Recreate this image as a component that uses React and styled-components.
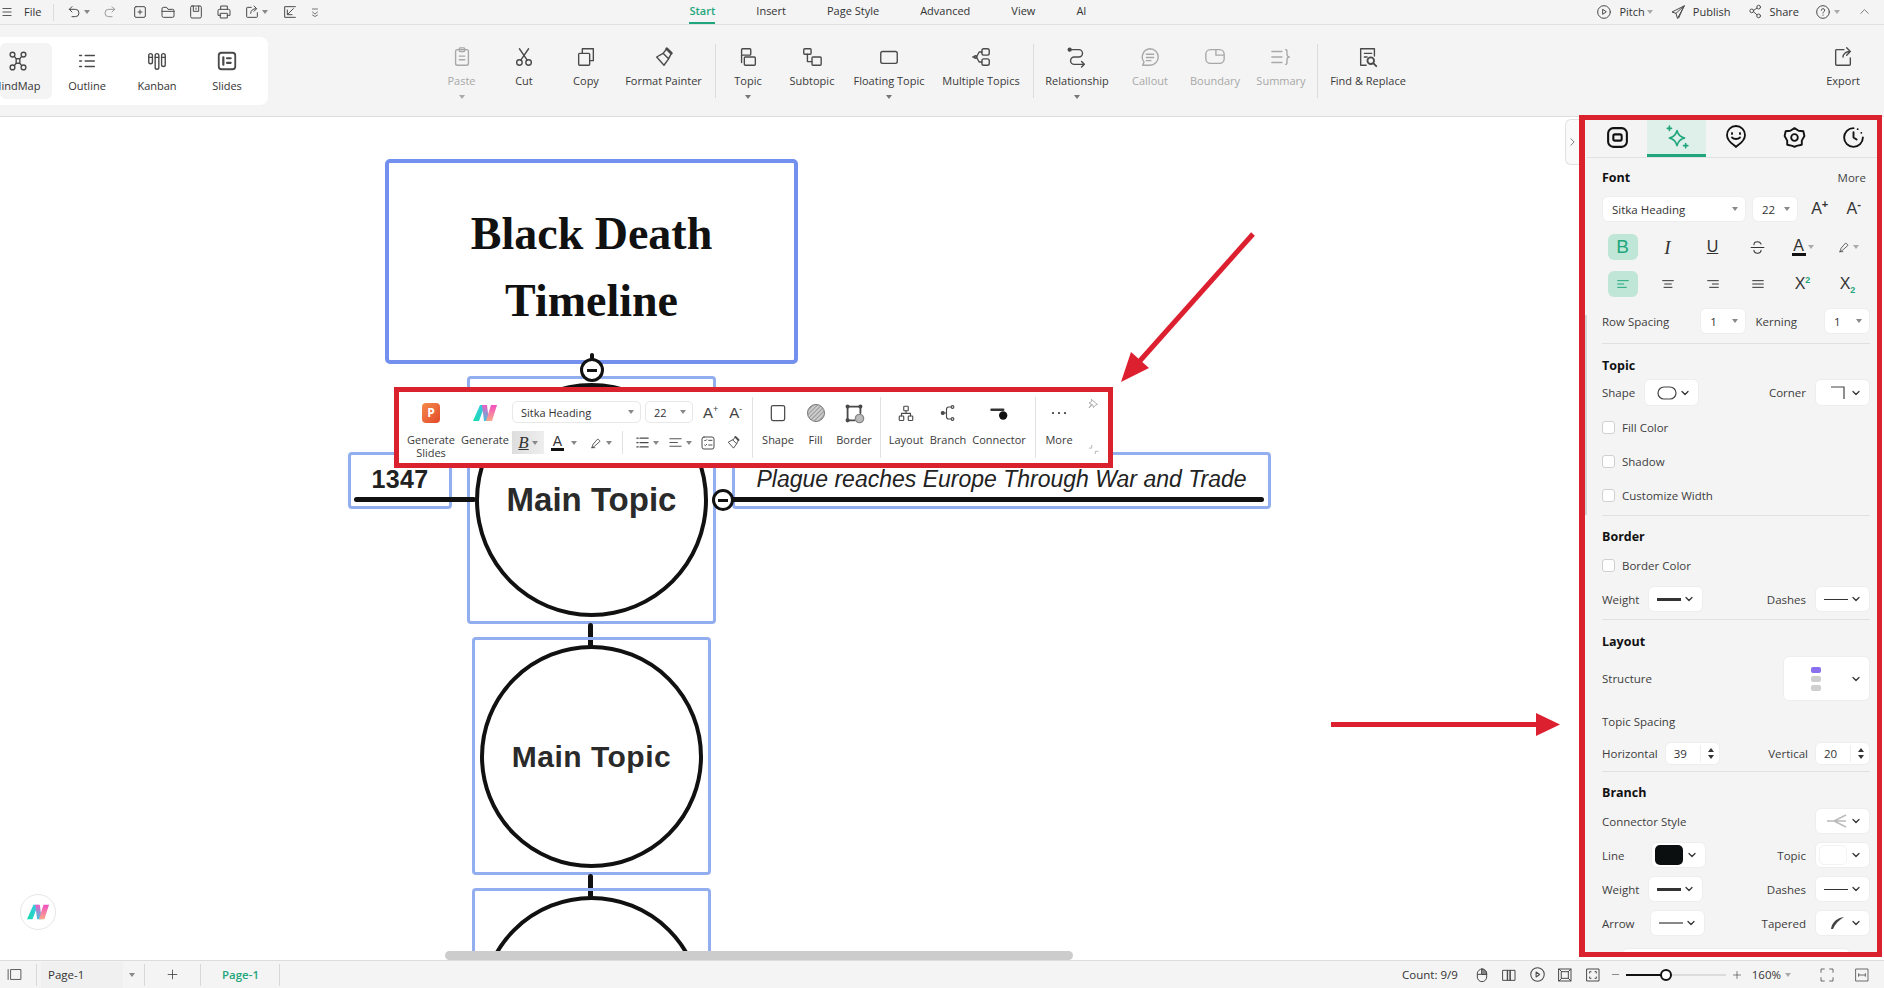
import React from 'react';
import styled, { createGlobalStyle, css } from 'styled-components';
import { ChevronDown, ChevronUp, ChevronRight, Plus, Minus } from 'lucide-react';

const GlobalStyle = createGlobalStyle`
  html, body { margin: 0; padding: 0; background: #fff; }
  body { font-family: "Open Sans", "Liberation Sans", sans-serif; font-size: 11px; color: #333; }
  * { box-sizing: border-box; }
`;

const RED = '#d9222e';
const GREEN = '#1fa67c';

const icons = {
  menu: <path d="M5 6h14M5 12h14M5 18h14" />,
  undo: <path d="M9 4 5 8l4 4M5 8h9a5.500 5.500 0 0 1 0 11H9" />,
  redo: <path d="M15 4l4 4-4 4M19 8h-9a5.500 5.500 0 0 0 0 11h5" />,
  add: <><rect x="4" y="4" width="16" height="16" rx="2" /><path d="M12 9v6M9 12h6" /></>,
  open: <path d="M3 7a2 2 0 0 1 2-2h5l2 3h7a2 2 0 0 1 2 2v8a2 2 0 0 1-2 2H5a2 2 0 0 1-2-2zM3 11h18" />,
  save: <><rect x="4" y="3" width="16" height="18" rx="2" /><path d="M8 3v8h8V3M12 6v2" /></>,
  print: <path d="M7 8V3h10v5M7 17H3v-7a2 2 0 0 1 2-2h14a2 2 0 0 1 2 2v7h-4M7 14h10v7H7z" />,
  share: <path d="M20 13v6a1 1 0 0 1-1 1H5a1 1 0 0 1-1-1V6a1 1 0 0 1 1-1h6M10 14c0-4 3-7 8-7M15 3l4 4-4 4" />,
  importDoc: <path d="M20 4H4v16h16M17 7l-9 9M8 9v7h7" />,
  more: <path d="M7 6h10M7 12l5 4 5-4M7 18l5 3 5-3" />,
  pitch: <><circle cx="12" cy="12" r="9.500" /><path d="M10 8.500v7l5-3.500z" /></>,
  send: <path d="M21 3 3 12l6 2 2 7zM21 3 9 14M21 3l-8 18" />,
  nodes: <><circle cx="6" cy="11" r="3" /><circle cx="17" cy="5" r="3" /><circle cx="17" cy="19" r="3" /><path d="M9 10l5.500-3.500M9 12.500l5.500 5" /></>,
  help: <><circle cx="12" cy="12" r="9.500" /><path d="M9.500 9.500a2.500 2.500 0 1 1 3.500 2.300c-.7.4-1 .8-1 1.700M12 16.500v.5" /></>,
  mindmap: <><circle cx="6" cy="5" r="2.600" /><circle cx="18" cy="5" r="2.600" /><circle cx="6" cy="19" r="2.600" /><circle cx="18" cy="19" r="2.600" /><path d="M8 7l2 2.500M16 7l-2 2.500M8 17l2-2.500M16 17l-2-2.500M10 9.500h4v5h-4z" /></>,
  outline: <path d="M4 6h2M10 6h10M4 12h2M10 12h10M4 18h2M10 18h10" />,
  kanban: <><rect x="3" y="4" width="4" height="11" rx="2" /><rect x="10" y="4" width="4" height="17" rx="2" /><rect x="17" y="4" width="4" height="14" rx="2" /><path d="M3 8h4M10 8h4M17 8h4" /></>,
  slides: <><rect x="3" y="3" width="18" height="18" rx="3" strokeWidth="2" /><path d="M8 8v8M12 9h4M12 14h4" strokeWidth="2.400" /></>,
  paste: <><rect x="5" y="4" width="14" height="17" rx="2" /><rect x="9" y="2" width="6" height="4" rx="1" /><path d="M9 11h6M9 15h6" /></>,
  cut: <><circle cx="7" cy="18" r="3" /><circle cx="17" cy="18" r="3" /><path d="M8.500 15.500 17 3M15.500 15.500 7 3" /></>,
  copy: <><rect x="4" y="8" width="12" height="13" rx="1" /><path d="M8 8V3h12v13l-4 0" /></>,
  painter: <><path d="M4 12l8 9 5-7-6-6zM11 8l4-5 5 5-3 6" /><path d="M15 3l5 5" strokeWidth="3" /></>,
  topic: <><rect x="5" y="3" width="10" height="7" rx="1" /><path d="M5 10v8" /><rect x="8" y="12" width="12" height="9" rx="1" /></>,
  subtopic: <><rect x="3" y="3" width="8" height="6" rx="1" /><path d="M7 9v8h5" /><rect x="12" y="12" width="10" height="9" rx="1" /></>,
  floating: <rect x="3" y="6" width="18" height="13" rx="2" />,
  multiple: <><rect x="13" y="3" width="8" height="7" rx="2" /><rect x="13" y="14" width="8" height="7" rx="2" /><path d="M13 6.500H10l-3 5.500 3 5.500h3M3 12h4" /><circle cx="6" cy="12" r="1.500" /></>,
  relation: <><path d="M4 4h10a3 3 0 0 1 0 8H9a3 3 0 0 0 0 8h10M17 17l3 3-3 3" /><circle cx="4" cy="4" r="1.600" fill="currentColor" /></>,
  callout: <path d="M12 3a9 9 0 0 1 0 18H4l1.500-3.500A9 9 0 0 1 12 3zM8 9h8M8 12.500h8M8 16h5" />,
  boundary: <path d="M7 4h10a5 5 0 0 1 5 5v5a5 5 0 0 1-5 5H7a5 5 0 0 1-5-5V9a5 5 0 0 1 5-5zM13 4v6H22" />,
  summary: <path d="M2 6h11M2 12h11M2 18h11M17 4c2 0 1.500 2 1.500 4s.5 4 2.500 4c-2 0-2.500 2-2.500 4s.5 4-1.500 4" />,
  find: <><path d="M10 21H4V3h15v8M8 8h8M8 12h3" /><circle cx="15" cy="16" r="3.600" strokeWidth="2" /><path d="M18 19l3 3" strokeWidth="2" /></>,
  exportIcon: <path d="M13 4H5a1 1 0 0 0-1 1v15a1 1 0 0 0 1 1h14a1 1 0 0 0 1-1v-7M12 12c0-3 3-6 7-6M16 2l4 4-4 4" />,
  square: <rect x="4" y="3" width="16" height="18" rx="2" />,
  border: <><path d="M6 5h12M5 6v13M6 20h7M19 6v6" strokeWidth="2" /><circle cx="5" cy="5" r="1.500" fill="currentColor" /><circle cx="19" cy="5" r="1.500" fill="currentColor" /><circle cx="5" cy="20" r="1.500" fill="currentColor" /><circle cx="18" cy="18" r="4.500" fill="#bbb" stroke="#888" /></>,
  layout: <><rect x="9" y="3" width="6" height="6" rx="1" /><rect x="3" y="16" width="6" height="6" rx="1" /><rect x="15" y="16" width="6" height="6" rx="1" /><path d="M12 9v3.500M6 16v-3.500h12V16" /></>,
  branch: <><circle cx="5" cy="12" r="2" fill="currentColor" /><circle cx="18" cy="4" r="1.800" /><circle cx="18" cy="20" r="1.800" /><path d="M7 12h3M16 4h-3a3 3 0 0 0-3 3v10a3 3 0 0 0 3 3h3" /></>,
  connector: <><path d="M3 8h14" strokeWidth="3" /><circle cx="17" cy="15" r="5" fill="#111" stroke="none" /></>,
  dots: <path d="M4 12h.01M12 12h.01M20 12h.01" strokeWidth="3" />,
  pin: <path d="M9 3l12 10-4 1-4 5-2-6-7 7 5-8-5-2 5-3z" />,
  collapse: <path d="M3 9h5V3M16 21v-5h6" />,
  list: <path d="M3 5h2M3 12h2M3 19h2M8 5h13M8 12h13M8 19h13" strokeWidth="2" />,
  align: <path d="M3 6h18M3 12h12M3 18h18" />,
  check: <><rect x="3" y="3" width="18" height="18" rx="3" /><path d="M7 8l1 1 2-2M13 8h5M7 15l1 1 2-2M13 15h5" /></>,
  pen: <><path d="M5 20l2-6 8-9 4 4-9 8z" /><path d="M5 20h5" /></>,
  strike: <path d="M17 7c-1-2-3-3-5-3-3 0-5 1.500-5 4M3 12h18M7 16c0 3 2 4 5 4s5-1 5-4" />,
  alignLeft: <path d="M4 7h16M4 12h9M4 17h13" />,
  alignCenter: <path d="M4 7h16M7 12h10M6 17h12" />,
  alignRight: <path d="M4 7h16M11 12h9M7 17h13" />,
  justify: <path d="M4 7h16M4 12h16M4 17h16" />,
  tabFrame: <><rect x="3" y="3" width="18" height="18" rx="5" strokeWidth="2" /><rect x="8" y="9" width="8" height="6" rx="1.500" strokeWidth="2" /></>,
  tabSpark: <path d="M12 6c1 4 3 6 7 7-4 1-6 3-7 7-1-4-3-6-7-7 4-1 6-3 7-7zM5 2v4M3 4h4M20 18v4M18 20h4" />,
  tabPin: <><path d="M12 22c-2-2.500-9-5-9-12a9 9 0 0 1 18 0c0 7-7 9.500-9 12z" /><path d="M8 8v1M16 8v1M8 12.500c2 2 6 2 8 0" /></>,
  tabBadge: <><path d="M12 3l4 2.500 4.500.5 1 4.500-2.500 4.500 0 4-5 1-2 1-2-1-5-1 0-4-2.500-4.500 1-4.500 4.500-.5z" /><circle cx="12" cy="12" r="3.200" /></>,
  tabClock: <path d="M12 3a9 9 0 1 0 9 9M12 7v5l3 2M16 4h.01M19.500 7.500h.01M21 12h.01" />,
  sidebar: <path d="M3 5v14M7 5h14v14H7z" />,
  mouse: <><path d="M12 3a7 7 0 0 1 7 7v5a7 7 0 0 1-14 0v-5a7 7 0 0 1 7-7zM5 11h14" /><path d="M12 3a7 7 0 0 1 7 8h-7z" fill="#888" /></>,
  book: <path d="M3 5h7v15H3zM10 5h4v15h-4zM14 5h7v15h-7z" />,
  fitPage: <path d="M3 3h18v18H3zM7 7h10v10H7zM3 3l4 4M21 3l-4 4M3 21l4-4M21 21l-4-4" />,
  fitScreen: <path d="M3 3h18v18H3zM7 9V7h2M15 7h2v2M17 15v2h-2M9 17H7v-2" />,
  full: <path d="M3 8V3h5M16 3h5v5M21 16v5h-5M8 21H3v-5" />,
  fitWidth: <path d="M3 3h18v18H3zM7 12h10M7 10v4M17 10v4" />,
};

const IconSvg = styled.svg`
  display: block;
  flex: none;
  fill: none;
  stroke: currentColor;
  stroke-width: ${p => p.$w || 1.5};
  stroke-linecap: round;
  stroke-linejoin: round;
  color: ${p => p.$c || '#4a4a4a'};
`;

const Icon = ({ name, size = 20, color, weight }) => (
  <IconSvg viewBox="0 0 24 24" width={size} height={size} $c={color} $w={weight}>
    {icons[name]}
  </IconSvg>
);

const Logo = ({ id, size = 24 }) => (
  <svg viewBox="0 0 24 24" width={size} height={size}>
    <defs>
      <linearGradient id={`${id}a`} x1="0" y1="1" x2="1" y2="0">
        <stop offset="0" stopColor="#17dcae" />
        <stop offset="1" stopColor="#3cc6ea" />
      </linearGradient>
      <linearGradient id={`${id}m`} x1="0" y1="0" x2="0" y2="1">
        <stop offset="0" stopColor="#f35cc0" />
        <stop offset="1" stopColor="#3cc6e0" />
      </linearGradient>
      <linearGradient id={`${id}b`} x1="0" y1="0" x2="0" y2="1">
        <stop offset="0" stopColor="#f24fc0" />
        <stop offset="1" stopColor="#f9a98a" />
      </linearGradient>
    </defs>
    <polygon points="0,20 7,4 12,4 6,20" fill={`url(#${id}a)`} />
    <polygon points="9,4 14,4 16,20 11,20" fill={`url(#${id}m)`} />
    <polygon points="13,20 18,4 24,4 19,20" fill={`url(#${id}b)`} />
  </svg>
);

const Page = styled.div`
  width: 1884px;
  height: 988px;
  display: flex;
  flex-direction: column;
  overflow: hidden;
  background: #fff;
`;

/* title bar */
const TitleBar = styled.header`
  height: 25px;
  flex: none;
  display: flex;
  align-items: center;
  background: #f4f4f4;
  border-bottom: 1px solid #e0e0e0;
  position: relative;
  z-index: 3;
`;

const TopSlot = styled.div`
  margin-left: ${p => p.$ml || 0}px;
  display: flex;
  align-items: center;
  flex: none;
  color: #333;
  padding-bottom: 1px;
`;

const TopSep = styled.div`
  width: 1px;
  height: 17px;
  background: #dcdcdc;
  margin-left: ${p => p.$ml || 0}px;
`;

const Caret = styled.span`
  display: block;
  flex: none;
  margin-left: ${p => p.$ml || 0}px;
  width: 0;
  height: 0;
  border-left: 3px solid transparent;
  border-right: 3px solid transparent;
  border-top: 4px solid ${p => p.$c || '#888'};
`;

const TopTabs = styled.nav`
  display: flex;
  gap: 41px;
  height: 24px;
  margin-left: 368px;
`;

const TopTab = styled.div`
  height: 24px;
  line-height: 21px;
  font-size: 11px;
  white-space: nowrap;
  color: ${p => (p.$active ? GREEN : '#333')};
  font-weight: ${p => (p.$active ? 600 : 400)};
  border-bottom: ${p => (p.$active ? `2px solid ${GREEN}` : '2px solid transparent')};
`;

const TopRight = styled.div`
  margin-left: auto;
  padding-right: 12px;
  display: flex;
  align-items: center;
`;

/* ribbon */
const Ribbon = styled.section`
  height: 92px;
  flex: none;
  display: flex;
  background: #f4f4f4;
  border-bottom: 1px solid #dedede;
`;

const ModeCard = styled.div`
  width: 268px;
  height: 68px;
  margin-top: 12px;
  flex: none;
  display: flex;
  align-items: center;
  background: #fff;
  border-radius: 0 8px 8px 0;
  margin-right: 162px;
`;

const ModeItem = styled.div`
  width: ${p => p.$w}px;
  margin-left: ${p => p.$ml || 0}px;
  height: 56px;
  flex: none;
  display: flex;
  flex-direction: column;
  align-items: center;
  padding-top: 7px;
  border-radius: 6px;
  background: ${p => (p.$active ? '#f4f4f4' : 'transparent')};
  font-size: 11px;
  white-space: nowrap;
  overflow: ${p => (p.$active ? 'hidden' : 'visible')};
`;

const ModeLabel = styled.span`
  margin-top: 7px;
  line-height: 14px;
`;

const ActiveIcon = styled.div`
  margin-left: -16px;
`;

const ActiveLabel = styled(ModeLabel)`
  margin-left: -20px;
`;

const RibbonItem = styled.div`
  width: ${p => p.$w}px;
  flex: none;
  display: flex;
  flex-direction: column;
  align-items: center;
  padding-top: 21px;
  white-space: nowrap;
  font-size: 11px;
  color: ${p => (p.$off ? '#a8a8a8' : '#3a3a3a')};
`;

const RibbonLabel = styled.span`
  margin-top: 6px;
  line-height: 14px;
  margin-bottom: 7px;
`;

const RibbonSep = styled.div`
  width: 1px;
  height: 54px;
  flex: none;
  margin: 19px 0 0 5px;
  background: #dcdcdc;
`;

const Spacer = styled.div`
  flex: 1;
`;

const RibbonEnd = styled.div`
  flex: 0 0 9px;
`;

/* main */
const Main = styled.main`
  flex: 1;
  min-height: 0;
  display: flex;
`;

const Canvas = styled.div`
  position: relative;
  width: 1579px;
  flex: none;
  overflow: hidden;
  background: #fff;
`;

const placed = css`
  position: absolute;
  left: ${p => p.$x}px;
  top: ${p => p.$y}px;
  width: ${p => p.$w}px;
  height: ${p => p.$h}px;
`;

const TitleNode = styled.div`
  ${placed}
  border: 4px solid #7390ee;
  border-radius: 5px;
  padding-top: 10px;
  display: flex;
  align-items: center;
  justify-content: center;
  text-align: center;
  font-family: "Liberation Serif", serif;
  font-weight: 700;
  font-size: 46px;
  line-height: 67px;
  color: #111;
`;

const SelectBox = styled.div`
  ${placed}
  border: 3px solid #93aeee;
  border-radius: 4px;
`;

const TopicCircle = styled.div`
  ${placed}
  border: 4.500px solid #111;
  border-radius: 50%;
  background: #fff;
  display: flex;
  align-items: center;
  justify-content: center;
  font-family: "Liberation Sans", sans-serif;
  font-weight: 700;
  font-size: ${p => p.$fs}px;
  letter-spacing: ${p => p.$ls || 0}px;
  color: #2a2a2a;
  white-space: nowrap;
`;

const BranchText = styled.div`
  ${placed}
  display: flex;
  align-items: center;
  justify-content: center;
  font-family: "Liberation Sans", sans-serif;
  font-size: ${p => p.$fs}px;
  font-weight: ${p => (p.$bold ? 700 : 400)};
  font-style: ${p => (p.$italic ? 'italic' : 'normal')};
  letter-spacing: ${p => p.$ls || 0}px;
  color: #222;
  white-space: nowrap;
`;

const Wire = styled.div`
  ${placed}
  background: #111;
  border-radius: 3px;
`;

const Collapse = styled.div`
  ${placed}
  border: 3px solid #111;
  border-radius: 50%;
  background: #fff;
  display: flex;
  align-items: center;
  justify-content: center;
  &::after {
    content: '';
    width: 10px;
    height: 3px;
    background: #111;
  }
`;

const ScrollThumb = styled.div`
  ${placed}
  background: #ccc;
  border-radius: 5px;
`;

const AiBadge = styled.div`
  ${placed}
  border: 1px solid #e6e6e6;
  border-radius: 50%;
  background: #fff;
  display: flex;
  align-items: center;
  justify-content: center;
`;

const PanelHandle = styled.div`
  ${placed}
  border: 1px solid #e2e2e2;
  border-right: none;
  border-radius: 6px 0 0 6px;
  background: #fafafa;
  display: flex;
  align-items: center;
  justify-content: flex-end;
`;

const Annotations = styled.svg`
  position: absolute;
  left: 0;
  top: 0;
  pointer-events: none;
`;

/* floating toolbar */
const FloatBar = styled.div`
  position: absolute;
  left: 394px;
  top: 270px;
  width: 719px;
  height: 81px;
  border: 5px solid ${RED};
  background: #fff;
  display: flex;
  padding-left: 4px;
`;

const FloatItem = styled.div`
  width: ${p => p.$w}px;
  flex: none;
  display: flex;
  flex-direction: column;
  align-items: center;
  padding-top: 10px;
  font-size: 11px;
  line-height: 13px;
  text-align: center;
  color: #3a3a3a;
  white-space: nowrap;
`;

const FloatIcon = styled.div`
  height: 22px;
  display: flex;
  align-items: center;
  justify-content: center;
  margin-bottom: 9px;
`;

const PptBadge = styled.div`
  width: 18px;
  height: 20px;
  border-radius: 4px;
  background: linear-gradient(135deg, #f58a4b, #e2492a);
  color: #fff;
  font-weight: 700;
  font-size: 12px;
  line-height: 20px;
  text-align: center;
`;

const FontGroup = styled.div`
  width: 240px;
  flex: none;
  display: flex;
  flex-direction: column;
  padding-top: 9px;
  margin-left: 1px;
`;

const FontRow = styled.div`
  display: flex;
  align-items: center;
  height: ${p => p.$h}px;
  margin-top: ${p => p.$mt || 0}px;
`;

const FloatSelect = styled.div`
  width: ${p => p.$w}px;
  height: 22px;
  margin-right: 4px;
  flex: none;
  display: flex;
  align-items: center;
  justify-content: space-between;
  padding: 0 6px 0 8px;
  border: 1px solid #e8e8e8;
  border-radius: 5px;
  font-size: 11px;
  color: #333;
`;

const GrowText = styled.span`
  font-size: ${p => p.$fs || 15}px;
  line-height: 1;
  color: #444;
  margin-left: ${p => p.$ml}px;
  font-family: "Liberation Sans", sans-serif;
  & sup {
    font-size: 9px;
    line-height: 0;
  }
`;

const MiniButton = styled.div`
  width: ${p => p.$w}px;
  height: 23px;
  flex: none;
  margin-left: ${p => p.$ml || 0}px;
  display: flex;
  align-items: center;
  justify-content: center;
  gap: 3px;
  background: ${p => (p.$active ? 'linear-gradient(90deg, #ddd, #eee)' : 'transparent')};
`;

const SerifB = styled.span`
  font-family: "Liberation Serif", serif;
  font-style: italic;
  font-size: 17px;
  line-height: 17px;
  text-decoration: underline;
  color: #333;
`;

const TextColorA = styled.span`
  display: block;
  font-family: "Liberation Sans", sans-serif;
  font-size: ${p => p.$fs || 14}px;
  line-height: ${p => (p.$fs ? p.$fs - 2 : 13)}px;
  width: ${p => p.$bw || 13}px;
  text-align: center;
  border-bottom: 3px solid #111;
  color: #333;
`;

const FloatSep = styled.div`
  width: 1px;
  height: ${p => p.$h || 61}px;
  flex: none;
  margin-top: ${p => p.$mt ?? 5}px;
  margin-left: ${p => p.$ml || 0}px;
  background: #e2e2e2;
`;

const PinColumn = styled.div`
  flex: 1;
  display: flex;
  flex-direction: column;
  align-items: center;
  justify-content: space-between;
  padding: 6px 0 8px;
  margin-left: 2px;
  margin-right: 6px;
`;

/* right panel */
const Panel = styled.aside`
  width: 303px;
  height: 842px;
  margin-top: -2px;
  flex: none;
  position: relative;
  z-index: 4;
  display: flex;
  flex-direction: column;
  overflow: hidden;
  border: 5px solid ${RED};
  border-left-width: 6px;
  background: #f4f4f4;
`;

const PanelEdge = styled.div`
  position: absolute;
  left: 0;
  top: 195px;
  width: 2px;
  height: 200px;
  background: #d4d4d4;
`;

const PanelTabs = styled.div`
  height: 38px;
  flex: none;
  display: flex;
  padding-left: 1px;
  border-bottom: 1px solid #e2e2e2;
  margin-left: 2px;
`;

const PanelTab = styled.div`
  width: 59px;
  flex: none;
  display: flex;
  align-items: center;
  justify-content: center;
  background: ${p => (p.$active ? '#dff0ea' : 'transparent')};
  border-bottom: ${p => (p.$active ? `3px solid ${GREEN}` : '3px solid transparent')};
`;

const PanelBody = styled.div`
  flex: 1;
  min-height: 0;
  overflow: hidden;
  padding: 0 7px 0 17px;
  font-size: 11.500px;
  color: #3d3d3d;
`;

const SectionTitle = styled.div`
  height: 18px;
  margin-top: ${p => p.$mt}px;
  padding-bottom: 2px;
  display: flex;
  justify-content: space-between;
  align-items: center;
  font-size: 12.500px;
  font-weight: 700;
  color: #111;
`;

const MoreLink = styled.span`
  font-weight: 400;
  font-size: 11.500px;
  color: #444;
  padding-right: 4px;
`;

const Row = styled.div`
  height: ${p => p.$h || 26}px;
  margin-top: ${p => p.$mt}px;
  display: flex;
  align-items: center;
  justify-content: space-between;
  white-space: nowrap;
`;

const RowGroup = styled.div`
  display: flex;
  align-items: center;
  height: 100%;
  gap: ${p => p.$gap || 0}px;
`;

const Picker = styled.div`
  width: ${p => p.$w}px;
  height: 100%;
  flex: none;
  display: flex;
  align-items: center;
  justify-content: space-between;
  padding: 0 7px 0 ${p => p.$pl || 8}px;
  background: #fff;
  border: 1px solid #eee;
  border-radius: 6px;
  font-size: 11.500px;
  color: #333;
`;

const PickerLine = styled.span`
  display: block;
  width: ${p => p.$w || 24}px;
  height: ${p => p.$t}px;
  background: ${p => p.$c || '#333'};
`;

const ColorSwatch = styled.span`
  display: block;
  width: 28px;
  height: 20px;
  margin-left: -5px;
  border-radius: 5px;
  background: ${p => p.$c};
  border: ${p => (p.$c === '#fff' ? '1px solid #f3f3f3' : 'none')};
`;

const GrowPair = styled.div`
  flex: 1;
  display: flex;
  justify-content: space-around;
  padding-left: 4px;
`;

const GrowGlyph = styled.span`
  font-family: "Liberation Sans", sans-serif;
  font-size: 16px;
  color: #333;
  & sup {
    font-size: 11px;
    line-height: 0;
    font-weight: 700;
  }
`;

const FormatGrid = styled.div`
  height: 26px;
  margin-top: ${p => p.$mt}px;
  margin-left: -2px;
  display: grid;
  grid-template-columns: repeat(6, 45px);
  justify-items: center;
  align-items: center;
`;

const FormatBtn = styled.div`
  width: 30px;
  height: 26px;
  display: flex;
  align-items: center;
  justify-content: center;
  gap: 2px;
  border-radius: 6px;
  background: ${p => (p.$active ? '#c0e6d8' : 'transparent')};
  color: ${p => (p.$active ? GREEN : '#333')};
  font-family: "Liberation Sans", sans-serif;
  font-size: 19px;
`;

const Glyph = styled.span`
  font-family: ${p => (p.$serif ? '"Liberation Serif", serif' : '"Liberation Sans", sans-serif')};
  font-style: ${p => (p.$italic ? 'italic' : 'normal')};
  font-size: ${p => p.$fs || 16}px;
  line-height: 1;
  text-decoration: ${p => p.$deco || 'none'};
  color: #333;
  & sub, & sup {
    font-size: 9px;
    font-weight: 700;
    color: ${GREEN};
    line-height: 0;
  }
`;

const CheckRow = styled.label`
  display: flex;
  align-items: center;
  gap: 7px;
  height: 18px;
  margin-top: ${p => p.$mt}px;
  padding-bottom: 1px;
`;

const CheckBox = styled.span`
  width: 13px;
  height: 13px;
  background: #fff;
  border: 1px solid #d0d0d0;
  border-radius: 3px;
`;

const Divider = styled.div`
  height: 1px;
  margin-top: ${p => p.$mt}px;
  background: #e0e0e0;
`;

const StructureStack = styled.div`
  display: flex;
  flex-direction: column;
  gap: 3px;
  margin-left: 19px;
`;

const StructureBlock = styled.span`
  display: block;
  width: 10px;
  height: 6px;
  border-radius: 2px;
  background: ${p => (p.$on ? '#8a6ff0' : '#cfcfcf')};
`;

const Spin = styled.div`
  width: 55px;
  height: 100%;
  display: flex;
  align-items: center;
  justify-content: space-between;
  padding: 0 5px 0 8px;
  background: #fff;
  border: 1px solid #eee;
  border-radius: 6px;
  font-size: 11.500px;
  color: #333;
`;

const SpinArrows = styled.div`
  height: 17px;
  display: flex;
  flex-direction: column;
  justify-content: center;
  gap: 3px;
  padding-left: 7px;
  border-left: 1px solid #eee;
`;

const SpinUp = styled.span`
  width: 0;
  height: 0;
  border-left: 3px solid transparent;
  border-right: 3px solid transparent;
  border-bottom: 4px solid #333;
`;

const SpinDown = styled(SpinUp)`
  border-bottom: none;
  border-top: 4px solid #333;
`;

const CutCard = styled.div`
  width: 228px;
  height: 20px;
  margin: 12px 0 0 20px;
  background: #fff;
  border: 1px solid #ececec;
  border-radius: 6px;
`;

/* status bar */
const StatusBar = styled.footer`
  height: 28px;
  flex: none;
  display: flex;
  align-items: center;
  background: #f4f4f4;
  border-top: 1px solid #dcdcdc;
  position: relative;
  z-index: 5;
  font-size: 11.500px;
  color: #333;
`;

const StatusSep = styled.div`
  width: 1px;
  height: 22px;
  flex: none;
  margin-left: ${p => p.$ml}px;
  background: #d8d8d8;
`;

const StatusSlot = styled.div`
  margin-left: ${p => p.$ml}px;
  flex: none;
  display: flex;
  align-items: center;
`;

const PageSelect = styled.div`
  width: 82px;
  height: 26px;
  margin-left: 4px;
  padding-left: 7px;
  flex: none;
  display: flex;
  align-items: center;
  background: #f0f0f0;
`;

const PageTab = styled.div`
  color: ${GREEN};
  font-weight: 600;
  margin-left: 21px;
  width: 57px;
  white-space: nowrap;
`;

const StatusRight = styled.div`
  margin-left: auto;
  padding-right: 14px;
  display: flex;
  align-items: center;
`;

const SliderTrack = styled.div`
  position: relative;
  width: 100px;
  height: 2px;
  margin-left: 5px;
  background: #dcdcdc;
`;

const SliderFill = styled.div`
  width: 40px;
  height: 2px;
  background: #111;
`;

const SliderKnob = styled.div`
  position: absolute;
  left: 34px;
  top: -5px;
  width: 12px;
  height: 12px;
  border: 2.500px solid #111;
  border-radius: 50%;
  background: #fff;
`;

const modeItems = [
  { icon: 'outline', label: 'Outline', ml: 5, w: 60 },
  { icon: 'kanban', label: 'Kanban', ml: 10, w: 60 },
  { icon: 'slides', label: 'Slides', ml: 11, w: 58 },
];

const ribbonGroups = [
  [
    { icon: 'paste', label: 'Paste', w: 63, off: true, caret: true },
    { icon: 'cut', label: 'Cut', w: 62 },
    { icon: 'copy', label: 'Copy', w: 62 },
    { icon: 'painter', label: 'Format Painter', w: 93 },
  ],
  [
    { icon: 'topic', label: 'Topic', w: 64, caret: true },
    { icon: 'subtopic', label: 'Subtopic', w: 64 },
    { icon: 'floating', label: 'Floating Topic', w: 90, caret: true },
    { icon: 'multiple', label: 'Multiple Topics', w: 94 },
  ],
  [
    { icon: 'relation', label: 'Relationship', w: 86, caret: true },
    { icon: 'callout', label: 'Callout', w: 60, off: true },
    { icon: 'boundary', label: 'Boundary', w: 70, off: true },
    { icon: 'summary', label: 'Summary', w: 62, off: true },
  ],
  [{ icon: 'find', label: 'Find & Replace', w: 100 }],
];

const RibbonButton = ({ item }) => (
  <RibbonItem $w={item.w} $off={item.off}>
    <Icon name={item.icon} size={22} color={item.off ? '#a8a8a8' : '#4a4a4a'} />
    <RibbonLabel>{item.label}</RibbonLabel>
    {item.caret && <Caret $c={item.off ? '#aaa' : '#777'} />}
  </RibbonItem>
);

const Drop = ({ w, pl, children }) => (
  <Picker $w={w} $pl={pl}>
    {children}
    <ChevronDown size={12} strokeWidth={2.5} color="#333" />
  </Picker>
);

const SmallDrop = ({ w, children }) => (
  <Picker $w={w} $pl={9}>
    {children}
    <Caret $c="#888" />
  </Picker>
);

const TitleArea = () => (
  <TitleBar>
    <TopSlot><Icon name="menu" size={14} color="#444" /></TopSlot>
    <TopSlot $ml={10}>File</TopSlot>
    <TopSep $ml={12} />
    <TopSlot $ml={12}><Icon name="undo" size={16} /></TopSlot>
    <Caret $ml={2} />
    <TopSlot $ml={12}><Icon name="redo" size={16} color="#999" /></TopSlot>
    <TopSlot $ml={14}><Icon name="add" size={16} /></TopSlot>
    <TopSlot $ml={12}><Icon name="open" size={16} /></TopSlot>
    <TopSlot $ml={12}><Icon name="save" size={16} /></TopSlot>
    <TopSlot $ml={12}><Icon name="print" size={16} /></TopSlot>
    <TopSlot $ml={12}><Icon name="share" size={16} /></TopSlot>
    <Caret $ml={2} />
    <TopSlot $ml={14}><Icon name="importDoc" size={16} /></TopSlot>
    <TopSlot $ml={11}><Icon name="more" size={12} /></TopSlot>
    <TopTabs>
      {['Start', 'Insert', 'Page Style', 'Advanced', 'View', 'AI'].map(t => (
        <TopTab key={t} $active={t === 'Start'}>{t}</TopTab>
      ))}
    </TopTabs>
    <TopRight>
      <Icon name="pitch" size={16} />
      <TopSlot $ml={7}>Pitch</TopSlot>
      <Caret $ml={2} $c="#aaa" />
      <TopSlot $ml={17}><Icon name="send" size={16} /></TopSlot>
      <TopSlot $ml={7}>Publish</TopSlot>
      <TopSlot $ml={18}><Icon name="nodes" size={15} /></TopSlot>
      <TopSlot $ml={6}>Share</TopSlot>
      <TopSlot $ml={16}><Icon name="help" size={16} /></TopSlot>
      <Caret $ml={3} $c="#aaa" />
      <TopSlot $ml={17}><ChevronUp size={15} strokeWidth={1.2} color="#555" /></TopSlot>
    </TopRight>
  </TitleBar>
);

const RibbonArea = () => (
  <Ribbon>
    <ModeCard>
      <ModeItem $w={52} $active>
        <ActiveIcon><Icon name="mindmap" size={22} /></ActiveIcon>
        <ActiveLabel>MindMap</ActiveLabel>
      </ModeItem>
      {modeItems.map(m => (
        <ModeItem key={m.label} $w={m.w} $ml={m.ml}>
          <Icon name={m.icon} size={22} />
          <ModeLabel>{m.label}</ModeLabel>
        </ModeItem>
      ))}
    </ModeCard>
    {ribbonGroups.map((group, i) => (
      <React.Fragment key={i}>
        {group.map(item => <RibbonButton key={item.label} item={item} />)}
        {i < 3 && <RibbonSep />}
      </React.Fragment>
    ))}
    <Spacer />
    <RibbonButton item={{ icon: 'exportIcon', label: 'Export', w: 64 }} />
    <RibbonEnd />
  </Ribbon>
);

const FloatingToolbar = () => (
  <FloatBar>
    <FloatItem $w={56}>
      <FloatIcon><PptBadge>P</PptBadge></FloatIcon>
      Generate<br />Slides
    </FloatItem>
    <FloatItem $w={52}>
      <FloatIcon><Logo id="bar" size={24} /></FloatIcon>
      Generate
    </FloatItem>
    <FontGroup>
      <FontRow $h={22}>
        <FloatSelect $w={129}>Sitka Heading<Caret /></FloatSelect>
        <FloatSelect $w={48}>22<Caret /></FloatSelect>
        <GrowText $ml={6}>A<sup>+</sup></GrowText>
        <GrowText $ml={11}>A<sup>-</sup></GrowText>
      </FontRow>
      <FontRow $h={23} $mt={8}>
        <MiniButton $w={32} $active><SerifB>B</SerifB><Caret /></MiniButton>
        <MiniButton $w={40}><TextColorA>A</TextColorA><Caret $ml={4} /></MiniButton>
        <MiniButton $w={32}><Icon name="pen" size={14} /><Caret /></MiniButton>
        <FloatSep $h={23} $mt={0} $ml={6} />
        <MiniButton $w={32} $ml={8}><Icon name="list" size={15} /><Caret /></MiniButton>
        <MiniButton $w={34}><Icon name="align" size={15} /><Caret /></MiniButton>
        <MiniButton $w={20} $ml={1}><Icon name="check" size={16} /></MiniButton>
        <MiniButton $w={20} $ml={5}><Icon name="painter" size={15} /></MiniButton>
      </FontRow>
    </FontGroup>
    <FloatSep />
    <FloatItem $w={50}><FloatIcon><Icon name="square" size={20} /></FloatIcon>Shape</FloatItem>
    <FloatItem $w={25}>
      <FloatIcon>
        <svg width="20" height="20" viewBox="0 0 20 20">
          <defs>
            <pattern id="hatch" width="3" height="3" patternUnits="userSpaceOnUse" patternTransform="rotate(45)">
              <rect width="3" height="3" fill="#ccc" />
              <rect width="1" height="3" fill="#999" />
            </pattern>
          </defs>
          <circle cx="10" cy="10" r="8.500" fill="url(#hatch)" stroke="#777" />
        </svg>
      </FloatIcon>
      Fill
    </FloatItem>
    <FloatItem $w={52}><FloatIcon><Icon name="border" size={22} /></FloatIcon>Border</FloatItem>
    <FloatSep />
    <FloatItem $w={50}><FloatIcon><Icon name="layout" size={18} /></FloatIcon>Layout</FloatItem>
    <FloatItem $w={34}><FloatIcon><Icon name="branch" size={18} /></FloatIcon>Branch</FloatItem>
    <FloatItem $w={68}><FloatIcon><Icon name="connector" size={20} color="#333" /></FloatIcon>Connector</FloatItem>
    <FloatSep $ml={2} />
    <FloatItem $w={46}><FloatIcon><Icon name="dots" size={18} color="#444" /></FloatIcon>More</FloatItem>
    <PinColumn>
      <Icon name="pin" size={12} color="#999" />
      <Icon name="collapse" size={11} color="#999" />
    </PinColumn>
  </FloatBar>
);

const MapCanvas = () => (
  <Canvas>
    <TitleNode $x={385} $y={42} $w={413} $h={205}>Black Death<br />Timeline</TitleNode>
    <Wire $x={590} $y={236} $w={4} $h={12} />
    <SelectBox $x={467} $y={259} $w={249} $h={248} />
    <TopicCircle $x={475} $y={266} $w={233} $h={234} $fs={33}>Main Topic</TopicCircle>
    <Collapse $x={580} $y={241} $w={24} $h={24} />

    <SelectBox $x={348} $y={335} $w={104} $h={57} />
    <BranchText $x={348} $y={337} $w={104} $h={50} $fs={25} $bold $ls={0.3}>1347</BranchText>
    <Wire $x={354} $y={380} $w={122} $h={5} />
    <SelectBox $x={732} $y={335} $w={539} $h={57} />
    <BranchText $x={732} $y={337} $w={539} $h={50} $fs={23} $italic>Plague reaches Europe Through War and Trade</BranchText>
    <Wire $x={722} $y={380} $w={542} $h={5} />
    <Collapse $x={712} $y={372} $w={22} $h={22} />

    <Wire $x={588} $y={506} $w={5} $h={24} />
    <SelectBox $x={472} $y={520} $w={239} $h={238} />
    <TopicCircle $x={480} $y={528} $w={223} $h={223} $fs={30} $ls={0.5}>Main Topic</TopicCircle>

    <Wire $x={588} $y={757} $w={5} $h={24} />
    <SelectBox $x={472} $y={771} $w={239} $h={120} />
    <TopicCircle $x={480} $y={779} $w={223} $h={223} $fs={30} />

    <ScrollThumb $x={445} $y={834} $w={628} $h={9} />
    <AiBadge $x={20} $y={777} $w={36} $h={36}><Logo id="badge" size={22} /></AiBadge>
    <PanelHandle $x={1565} $y={2} $w={14} $h={46}>
      <ChevronRight size={14} strokeWidth={1.4} color="#555" />
    </PanelHandle>

    <FloatingToolbar />

    <Annotations width="1579" height="843" viewBox="0 0 1579 843">
      <line x1="1253" y1="117" x2="1138" y2="246" stroke="#dd2030" strokeWidth="5" />
      <polygon points="1121,265 1149,251 1131,235" fill="#dd2030" />
      <line x1="1331" y1="607.500" x2="1540" y2="607.500" stroke="#dd2030" strokeWidth="5" />
      <polygon points="1560,607.500 1536,596 1536,619" fill="#dd2030" />
    </Annotations>
  </Canvas>
);

const SidePanel = () => (
  <Panel>
    <PanelEdge />
    <PanelTabs>
      <PanelTab><Icon name="tabFrame" size={25} color="#111" /></PanelTab>
      <PanelTab $active><Icon name="tabSpark" size={26} color={GREEN} /></PanelTab>
      <PanelTab><Icon name="tabPin" size={24} color="#111" weight={1.8} /></PanelTab>
      <PanelTab><Icon name="tabBadge" size={25} color="#111" weight={1.8} /></PanelTab>
      <PanelTab><Icon name="tabClock" size={25} color="#111" weight={1.8} /></PanelTab>
    </PanelTabs>
    <PanelBody>
      <SectionTitle $mt={11}>Font<MoreLink>More</MoreLink></SectionTitle>
      <Row $mt={9}>
        <RowGroup $gap={6}>
          <SmallDrop w={144}>Sitka Heading</SmallDrop>
          <SmallDrop w={46}>22</SmallDrop>
        </RowGroup>
        <GrowPair>
          <GrowGlyph>A<sup>+</sup></GrowGlyph>
          <GrowGlyph>A<sup>-</sup></GrowGlyph>
        </GrowPair>
      </Row>
      <FormatGrid $mt={12}>
        <FormatBtn $active>B</FormatBtn>
        <FormatBtn><Glyph $serif $italic $fs={19}>I</Glyph></FormatBtn>
        <FormatBtn><Glyph $deco="underline" $fs={16}>U</Glyph></FormatBtn>
        <FormatBtn><Icon name="strike" size={17} color="#333" /></FormatBtn>
        <FormatBtn><TextColorA $fs={16} $bw={14}>A</TextColorA><Caret $c="#aaa" /></FormatBtn>
        <FormatBtn><Icon name="pen" size={14} color="#555" /><Caret $c="#aaa" /></FormatBtn>
      </FormatGrid>
      <FormatGrid $mt={11}>
        <FormatBtn $active><Icon name="alignLeft" size={16} color={GREEN} /></FormatBtn>
        <FormatBtn><Icon name="alignCenter" size={16} color="#333" /></FormatBtn>
        <FormatBtn><Icon name="alignRight" size={16} color="#333" /></FormatBtn>
        <FormatBtn><Icon name="justify" size={16} color="#333" /></FormatBtn>
        <FormatBtn><Glyph>X<sup>2</sup></Glyph></FormatBtn>
        <FormatBtn><Glyph>X<sub>2</sub></Glyph></FormatBtn>
      </FormatGrid>
      <Row $mt={11}>
        <RowGroup $gap={31}>Row Spacing<SmallDrop w={46}>1</SmallDrop></RowGroup>
        <RowGroup $gap={27}>Kerning<SmallDrop w={46}>1</SmallDrop></RowGroup>
      </Row>
      <Divider $mt={9} />

      <SectionTitle $mt={13}>Topic</SectionTitle>
      <Row $mt={4} $h={27}>
        <RowGroup $gap={9}>
          Shape
          <Drop w={55} pl={12}>
            <svg width="20" height="14" viewBox="0 0 20 14"><rect x="1" y="1" width="18" height="12" rx="6" fill="none" stroke="#444" strokeWidth="1.200" /></svg>
          </Drop>
        </RowGroup>
        <RowGroup $gap={9}>
          Corner
          <Drop w={55} pl={14}>
            <svg width="16" height="14" viewBox="0 0 16 14"><path d="M1 1h13v12" fill="none" stroke="#444" strokeWidth="1.200" /></svg>
          </Drop>
        </RowGroup>
      </Row>
      <CheckRow $mt={13}><CheckBox />Fill Color</CheckRow>
      <CheckRow $mt={16}><CheckBox />Shadow</CheckRow>
      <CheckRow $mt={16}><CheckBox />Customize Width</CheckRow>
      <Divider $mt={10} />

      <SectionTitle $mt={12}>Border</SectionTitle>
      <CheckRow $mt={11}><CheckBox />Border Color</CheckRow>
      <Row $mt={11}>
        <RowGroup $gap={9}>Weight<Drop w={55}><PickerLine $t={3} /></Drop></RowGroup>
        <RowGroup $gap={9}>Dashes<Drop w={55}><PickerLine $t={1} /></Drop></RowGroup>
      </Row>
      <Divider $mt={7} />

      <SectionTitle $mt={13}>Layout</SectionTitle>
      <Row $mt={5} $h={45}>
        Structure
        <Drop w={87}>
          <StructureStack>
            <StructureBlock $on />
            <StructureBlock />
            <StructureBlock />
          </StructureStack>
        </Drop>
      </Row>
      <Row $mt={11} $h={18}>Topic Spacing</Row>
      <Row $mt={12} $h={23}>
        <RowGroup $gap={7}>
          Horizontal
          <Spin>39<SpinArrows><SpinUp /><SpinDown /></SpinArrows></Spin>
        </RowGroup>
        <RowGroup $gap={7}>
          Vertical
          <Spin>20<SpinArrows><SpinUp /><SpinDown /></SpinArrows></Spin>
        </RowGroup>
      </Row>
      <Divider $mt={6} />

      <SectionTitle $mt={12}>Branch</SectionTitle>
      <Row $mt={6}>
        Connector Style
        <Drop w={55} pl={10}>
          <svg width="22" height="16" viewBox="0 0 22 16"><path d="M1 8h7M8 8l12-6M8 8h12M8 8l12 6" fill="none" stroke="#bbb" strokeWidth="1.500" /></svg>
        </Drop>
      </Row>
      <Row $mt={8}>
        <RowGroup $gap={27}>Line<Drop w={55}><ColorSwatch $c="#0b0f0f" /></Drop></RowGroup>
        <RowGroup $gap={9}>Topic<Drop w={55}><ColorSwatch $c="#fff" /></Drop></RowGroup>
      </Row>
      <Row $mt={8}>
        <RowGroup $gap={9}>Weight<Drop w={55}><PickerLine $t={3} /></Drop></RowGroup>
        <RowGroup $gap={9}>Dashes<Drop w={55}><PickerLine $t={1} /></Drop></RowGroup>
      </Row>
      <Row $mt={8}>
        <RowGroup $gap={15}>Arrow<Drop w={55}><PickerLine $t={1.500} $c="#888" /></Drop></RowGroup>
        <RowGroup $gap={9}>
          Tapered
          <Drop w={55} pl={13}>
            <svg width="16" height="14" viewBox="0 0 16 14"><path d="M2 13C3 6 8 2 15 1 10 4 6 8 4 13z" fill="#444" /></svg>
          </Drop>
        </RowGroup>
      </Row>
      <CutCard />
    </PanelBody>
  </Panel>
);

const StatusArea = () => (
  <StatusBar>
    <StatusSlot $ml={6}><Icon name="sidebar" size={17} color="#444" weight={1.2} /></StatusSlot>
    <StatusSep $ml={13} />
    <PageSelect>Page-1</PageSelect>
    <Caret $ml={6} />
    <StatusSep $ml={9} />
    <StatusSlot $ml={20}><Plus size={15} strokeWidth={1.2} color="#333" /></StatusSlot>
    <StatusSep $ml={20} />
    <PageTab>Page-1</PageTab>
    <StatusSep $ml={0} />
    <StatusRight>
      Count: 9/9
      <StatusSlot $ml={16}><Icon name="mouse" size={16} /></StatusSlot>
      <StatusSlot $ml={11}><Icon name="book" size={16} /></StatusSlot>
      <StatusSlot $ml={12}><Icon name="pitch" size={17} /></StatusSlot>
      <StatusSlot $ml={11}><Icon name="fitPage" size={16} /></StatusSlot>
      <StatusSlot $ml={12}><Icon name="fitScreen" size={16} /></StatusSlot>
      <StatusSlot $ml={9}><Minus size={11} strokeWidth={1.2} color="#333" /></StatusSlot>
      <SliderTrack>
        <SliderFill />
        <SliderKnob />
      </SliderTrack>
      <StatusSlot $ml={5}><Plus size={12} strokeWidth={1.2} color="#333" /></StatusSlot>
      <StatusSlot $ml={9}>160%</StatusSlot>
      <Caret $ml={4} $c="#aaa" />
      <StatusSlot $ml={28}><Icon name="full" size={16} weight={1.2} /></StatusSlot>
      <StatusSlot $ml={19}><Icon name="fitWidth" size={16} weight={1.2} /></StatusSlot>
    </StatusRight>
  </StatusBar>
);

export default function App() {
  return (
    <Page>
      <GlobalStyle />
      <TitleArea />
      <RibbonArea />
      <Main>
        <MapCanvas />
        <SidePanel />
      </Main>
      <StatusArea />
    </Page>
  );
}
